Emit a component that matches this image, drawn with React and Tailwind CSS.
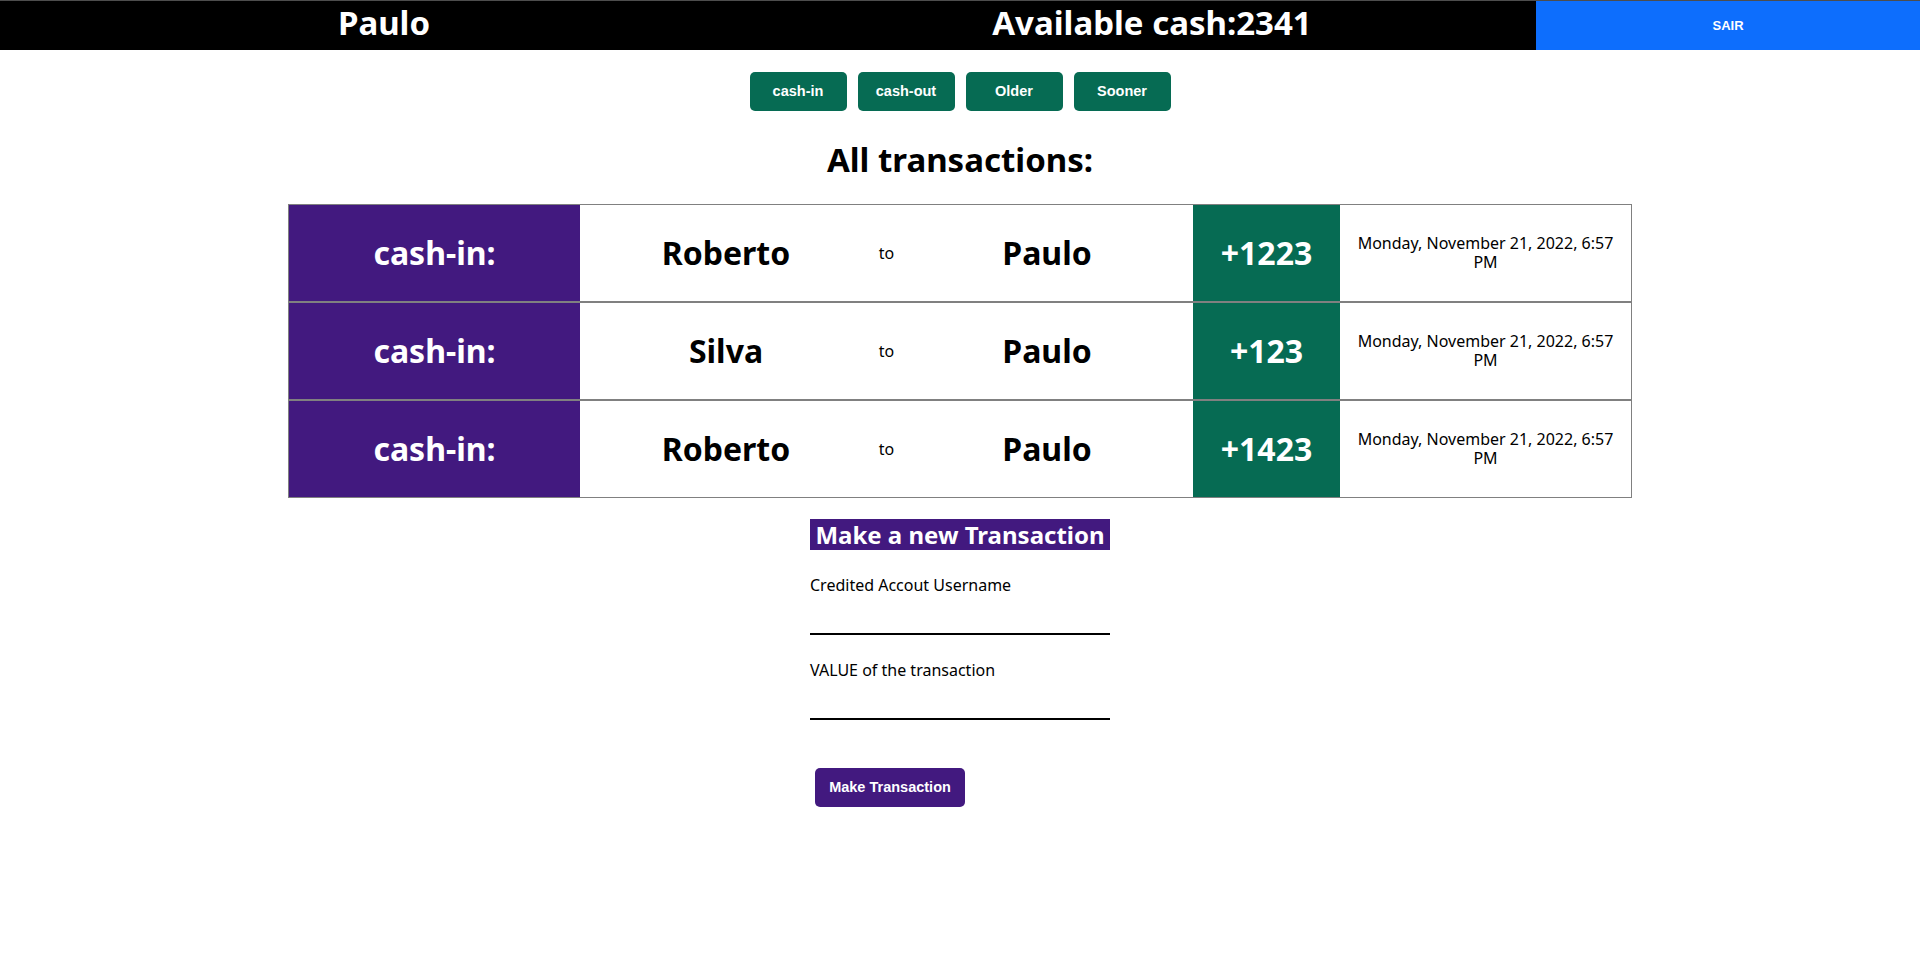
import React from "react";

const rows = [
  { from: "Roberto", to: "Paulo", value: "+1223" },
  { from: "Silva", to: "Paulo", value: "+123" },
  { from: "Roberto", to: "Paulo", value: "+1423" },
];

export default function App() {
  return (
    <div className="min-h-[976px] bg-white text-black font-['Noto_Sans','Open_Sans',sans-serif]">
      <header className="flex h-[50px] bg-black border-t border-[#4d4d4d]">
        <div className="w-[40%] flex items-center justify-center pb-[6px] text-white font-bold text-[33px] leading-none">
          Paulo
        </div>
        <div className="w-[40%] flex items-center justify-center pb-[6px] text-white font-bold text-[33px] leading-none">
          Available cash:2341
        </div>
        <button className="w-[20%] bg-[#0d6efd] text-white font-bold text-[13px] font-['Liberation_Sans',Arial,sans-serif]">
          SAIR
        </button>
      </header>

      <div className="flex justify-center gap-[11px] mt-[22px]">
        {["cash-in", "cash-out", "Older", "Sooner"].map((t) => (
          <button
            key={t}
            className="w-[97px] h-[39px] rounded-[5px] bg-[#066b53] text-white font-bold text-[14.5px] font-['Liberation_Sans',Arial,sans-serif]"
          >
            {t}
          </button>
        ))}
      </div>

      <h1 className="mt-[26px] text-center font-bold text-[33px] leading-[46px]">All transactions:</h1>

      <div className="mt-[21px] mx-auto w-[1344px] flex flex-col">
        {rows.map((r, i) => (
          <div key={i} className="flex h-[98px] border border-[#808080]">
            <div className="w-[291px] bg-[#42197f] flex items-center justify-center text-white font-bold text-[32px]">
              cash-in:
            </div>
            <div className="w-[292px] flex items-center justify-center font-bold text-[32px]">{r.from}</div>
            <div className="w-[29px] flex items-center justify-center text-[16px]">to</div>
            <div className="w-[292px] flex items-center justify-center font-bold text-[32px]">{r.to}</div>
            <div className="w-[147px] bg-[#066b53] flex items-center justify-center text-white font-bold text-[32px]">
              {r.value}
            </div>
            <div className="flex-1 flex items-center justify-center text-center text-[16px] leading-[19px] px-[4px]">
              <span className="whitespace-nowrap">
                Monday, November 21, 2022, 6:57
                <br />
                PM
              </span>
            </div>
          </div>
        ))}
      </div>

      <div className="mt-[21px] mx-auto w-[300px] flex flex-col">
        <h2 className="h-[31px] bg-[#42197f] text-white font-bold text-[24px] leading-[31px] text-center whitespace-nowrap">
          Make a new Transaction
        </h2>
        <label className="mt-[26px] text-[16px] leading-[19px]">Credited Accout Username</label>
        <input className="h-[40px] border-b-2 border-black outline-none" />
        <label className="mt-[26px] text-[16px] leading-[19px]">VALUE of the transaction</label>
        <input className="h-[40px] border-b-2 border-black outline-none" />
        <button className="mt-[48px] ml-[5px] w-[150px] h-[39px] rounded-[5px] bg-[#42197f] text-white font-bold text-[14.5px] font-['Liberation_Sans',Arial,sans-serif]">
          Make Transaction
        </button>
      </div>
    </div>
  );
}
